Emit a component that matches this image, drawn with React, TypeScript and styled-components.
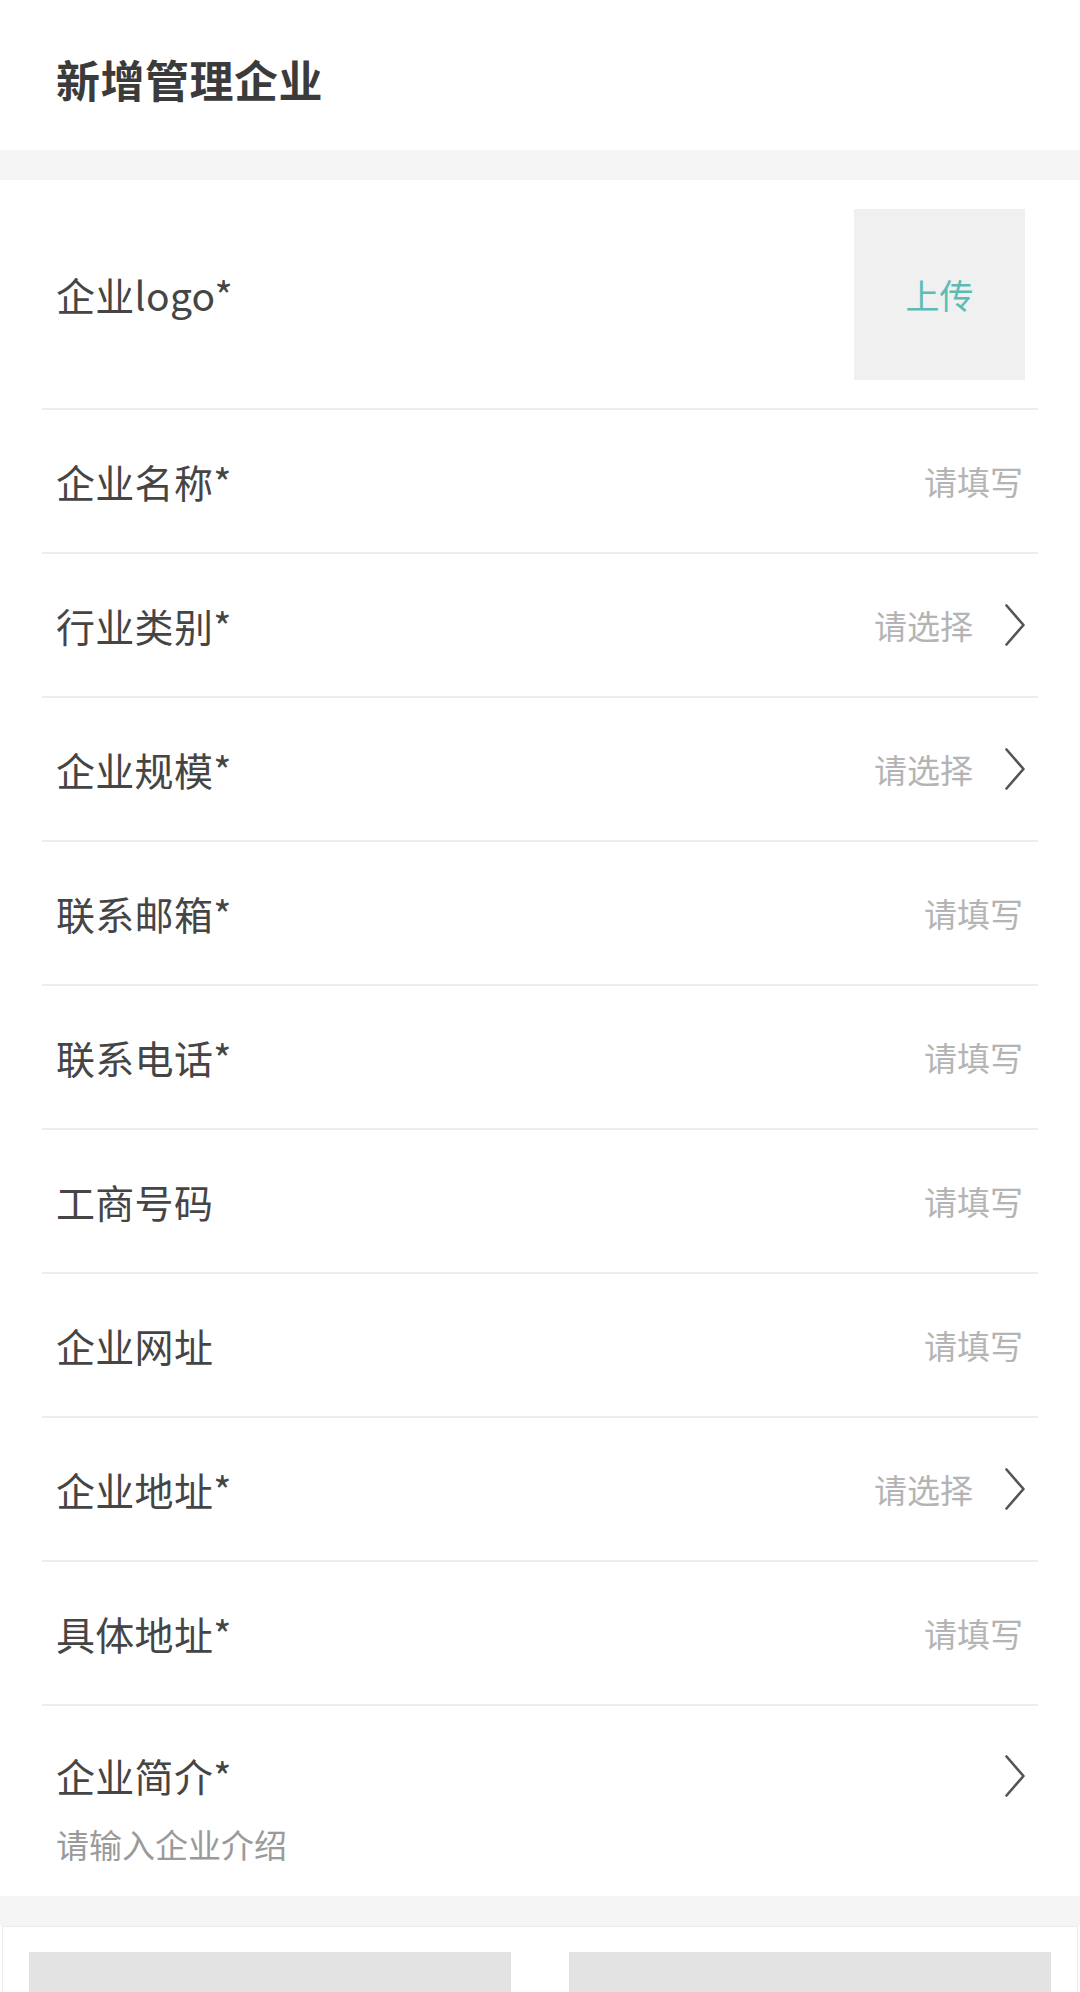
import React from 'react';
import styled, {createGlobalStyle} from "styled-components";

interface IFieldRow {
    label: string,
    required: boolean,
    kind: 'input' | 'select'
}

const fieldRows: IFieldRow[] = [
    {label: '企业名称', required: true, kind: 'input'},
    {label: '行业类别', required: true, kind: 'select'},
    {label: '企业规模', required: true, kind: 'select'},
    {label: '联系邮箱', required: true, kind: 'input'},
    {label: '联系电话', required: true, kind: 'input'},
    {label: '工商号码', required: false, kind: 'input'},
    {label: '企业网址', required: false, kind: 'input'},
    {label: '企业地址', required: true, kind: 'select'},
    {label: '具体地址', required: true, kind: 'input'},
]

const Chevron = () => (
    <ChevronSvg viewBox="0 0 22 42" width={22} height={42}>
        <polyline points="2.5,1.5 19.5,21 2.5,40.5" fill="none" stroke="#555" strokeWidth={2.6}
                  strokeLinecap="round" strokeLinejoin="round"/>
    </ChevronSvg>
)

function App() {

    const getRows = (rows: IFieldRow[]): JSX.Element[] => {
        return rows.map(({label, required, kind}, index) => {
            return (
                <Row key={label + index.toString()}>
                    <Label>{label}{required ? '*' : ''}</Label>
                    <RightSide>
                        <Placeholder>{kind === 'select' ? '请选择' : '请填写'}</Placeholder>
                        {kind === 'select' && <Chevron/>}
                    </RightSide>
                </Row>
            )
        })
    }

    return (
        <Page>
            <GlobalStyle/>
            <Header>
                <Title>新增管理企业</Title>
            </Header>
            <Band/>
            <FormList>
                <LogoRow>
                    <Label>企业logo*</Label>
                    <UploadBox>上传</UploadBox>
                </LogoRow>
                {getRows(fieldRows)}
                <IntroRow>
                    <IntroTop>
                        <Label>企业简介*</Label>
                        <Chevron/>
                    </IntroTop>
                    <IntroHint>请输入企业介绍</IntroHint>
                </IntroRow>
            </FormList>
            <Band/>
            <ButtonCard>
                <ButtonSlot/>
                <ButtonSlot/>
            </ButtonCard>
        </Page>
    );
}

const GlobalStyle = createGlobalStyle`
  html, body {
    margin: 0;
    padding: 0;
    background: #ffffff;
  }
  body {
    font-family: "Noto Sans CJK SC", "Noto Sans", sans-serif;
    overflow: hidden;
  }
`;

const Page = styled.div`
  width: 1080px;
  height: 1992px;
  overflow: hidden;
  background: #ffffff;
`;

const Header = styled.div`
  height: 150px;
  display: flex;
  align-items: center;
  padding: 8px 56px 0;
  box-sizing: border-box;
`;

const Title = styled.h1`
  margin: 0;
  font-size: 44px;
  line-height: 1;
  font-weight: 700;
  color: #3b3b3b;
  letter-spacing: 0.5px;
`;

const Band = styled.div`
  height: 30px;
  background: #f5f5f5;
`;

const FormList = styled.div`
  margin: 0 42px;
`;

const Row = styled.div`
  height: 144px;
  box-sizing: border-box;
  border-bottom: 2px solid #ececec;
  display: flex;
  align-items: center;
  justify-content: space-between;
  padding: 0 12px 0 14px;
`;

const LogoRow = styled(Row)`
  height: 230px;
  padding-right: 13px;
`;

const Label = styled.span`
  font-size: 39px;
  line-height: 1;
  color: #454545;
  letter-spacing: 0.3px;
`;

const RightSide = styled.div`
  display: flex;
  align-items: center;
  gap: 28px;
`;

const Placeholder = styled.span`
  font-size: 33px;
  line-height: 1;
  color: #b4b4b4;
  padding-right: 3px;
`;

const ChevronSvg = styled.svg`
  display: block;
  flex-shrink: 0;
`;

const UploadBox = styled.div`
  width: 171px;
  height: 171px;
  background: #f0f0f0;
  display: flex;
  align-items: center;
  justify-content: center;
  font-size: 34px;
  color: #5cbcb5;
`;

const IntroRow = styled.div`
  height: 190px;
  box-sizing: border-box;
  padding: 50px 12px 0 14px;
`;

const IntroTop = styled.div`
  display: flex;
  align-items: center;
  justify-content: space-between;
  height: 39px;
`;

const IntroHint = styled.div`
  margin-top: 33px;
  font-size: 33px;
  line-height: 1;
  color: #9a9a9a;
`;

const ButtonCard = styled.div`
  margin: 0 2px;
  border: 1px solid #ececec;
  border-bottom: none;
  padding: 25px 26px 0;
  display: grid;
  grid-template-columns: 1fr 1fr;
  gap: 58px;
  background: #ffffff;
`;

const ButtonSlot = styled.div`
  height: 120px;
  background: #e3e3e3;
`;

export default App;
